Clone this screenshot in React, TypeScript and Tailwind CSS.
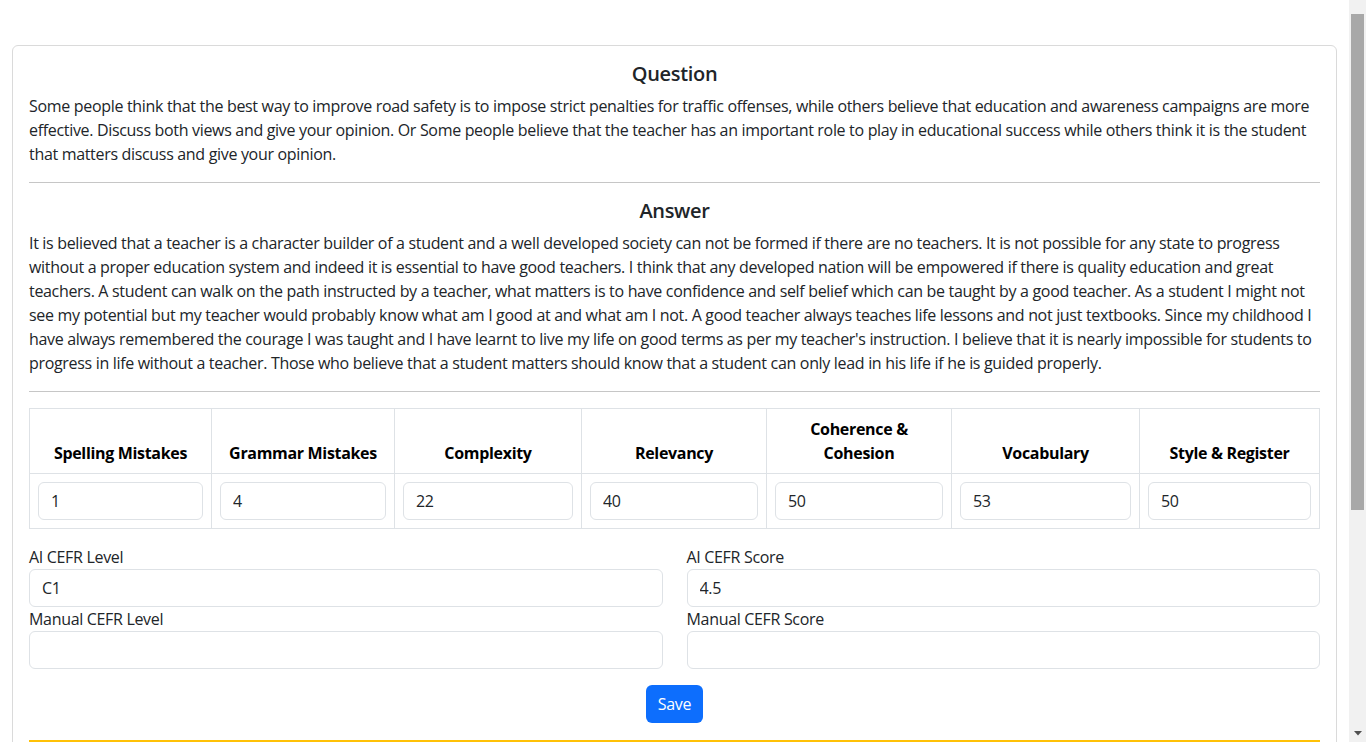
import React from 'react';

const question =
  'Some people think that the best way to improve road safety is to impose strict penalties for traffic offenses, while others believe that education and awareness campaigns are more effective. Discuss both views and give your opinion. Or Some people believe that the teacher has an important role to play in educational success while others think it is the student that matters discuss and give your opinion.';

const answer =
  "It is believed that a teacher is a character builder of a student and a well developed society can not be formed if there are no teachers. It is not possible for any state to progress without a proper education system and indeed it is essential to have good teachers. I think that any developed nation will be empowered if there is quality education and great teachers. A student can walk on the path instructed by a teacher, what matters is to have confidence and self belief which can be taught by a good teacher. As a student I might not see my potential but my teacher would probably know what am I good at and what am I not. A good teacher always teaches life lessons and not just textbooks. Since my childhood I have always remembered the courage I was taught and I have learnt to live my life on good terms as per my teacher's instruction. I believe that it is nearly impossible for students to progress in life without a teacher. Those who believe that a student matters should know that a student can only lead in his life if he is guided properly.";

const scores = [
  { label: 'Spelling Mistakes', value: '1', w: 'w-[182px]' },
  { label: 'Grammar Mistakes', value: '4', w: 'w-[183px]' },
  { label: 'Complexity', value: '22', w: 'w-[187px]' },
  { label: 'Relevancy', value: '40', w: 'w-[185px]' },
  { label: 'Coherence & Cohesion', value: '50', w: 'w-[185px]' },
  { label: 'Vocabulary', value: '53', w: 'w-[188px]' },
  { label: 'Style & Register', value: '50', w: 'w-[180px]' },
];

function Field({ label, value }: { label: string; value: string }) {
  return (
    <div>
      <label className="block leading-6">{label}</label>
      <input
        readOnly
        value={value}
        className="block w-full h-[38px] px-3 border border-[#dee2e6] rounded-md bg-white text-[#212529] tracking-[-0.02em] outline-none"
      />
    </div>
  );
}

// browser scrollbar strip, as in the screenshot
function Scrollbar() {
  return (
    <div className="w-[17px] shrink-0 bg-[#f1f1f1] flex flex-col">
      <div className="mt-[14px] mx-[2px] h-[496px] bg-[#a8a8a8]" />
      <div className="flex-1" />
      <div className="h-[17px] flex items-center justify-center">
        <svg width="8" height="5" viewBox="0 0 8 5">
          <path d="M0 0h8L4 4.5z" fill="#505050" />
        </svg>
      </div>
    </div>
  );
}

export default function App() {
  return (
    <div className="h-screen flex bg-white text-[#212529] text-base leading-6 tracking-[-0.02em] font-['Open_Sans',sans-serif]">
      <div className="flex-1 min-w-0 overflow-hidden">
        <div className="px-3 pt-[45px] pb-2">
          <div className="border border-[#dadada] rounded-md p-4">
            <h5 className="text-center text-xl leading-6 font-semibold mb-2">Question</h5>
            <p>{question}</p>
            <hr className="my-4 border-[#c6c6c6]" />
            <h5 className="text-center text-xl leading-6 font-semibold mb-2">Answer</h5>
            <p>{answer}</p>
            <hr className="my-4 border-[#c6c6c6]" />

            <table className="w-full table-fixed border-collapse mb-4">
              <thead>
                <tr>
                  {scores.map((s) => (
                    <th
                      key={s.label}
                      className={`${s.w} border border-[#dee2e6] px-2 py-2 align-bottom text-center font-bold text-black`}
                    >
                      {s.label}
                    </th>
                  ))}
                </tr>
              </thead>
              <tbody>
                <tr>
                  {scores.map((s) => (
                    <td key={s.label} className="border border-[#dee2e6] px-2 py-2">
                      <input
                        readOnly
                        value={s.value}
                        className="block w-full h-[38px] px-3 border border-[#dee2e6] rounded-md bg-white tracking-[-0.02em] outline-none"
                      />
                    </td>
                  ))}
                </tr>
              </tbody>
            </table>

            <div className="grid grid-cols-2 gap-x-6">
              <div>
                <Field label="AI CEFR Level" value="C1" />
                <Field label="Manual CEFR Level" value="" />
              </div>
              <div>
                <Field label="AI CEFR Score" value="4.5" />
                <Field label="Manual CEFR Score" value="" />
              </div>
            </div>

            <div className="flex justify-center mt-4">
              <button className="h-[38px] px-3 rounded-md bg-[#0d6efd] text-white tracking-[-0.02em]">Save</button>
            </div>

            <div className="mt-[17px] h-[300px] border-t-4 border-[#ffc107]" />
          </div>
        </div>
      </div>
      <Scrollbar />
    </div>
  );
}
